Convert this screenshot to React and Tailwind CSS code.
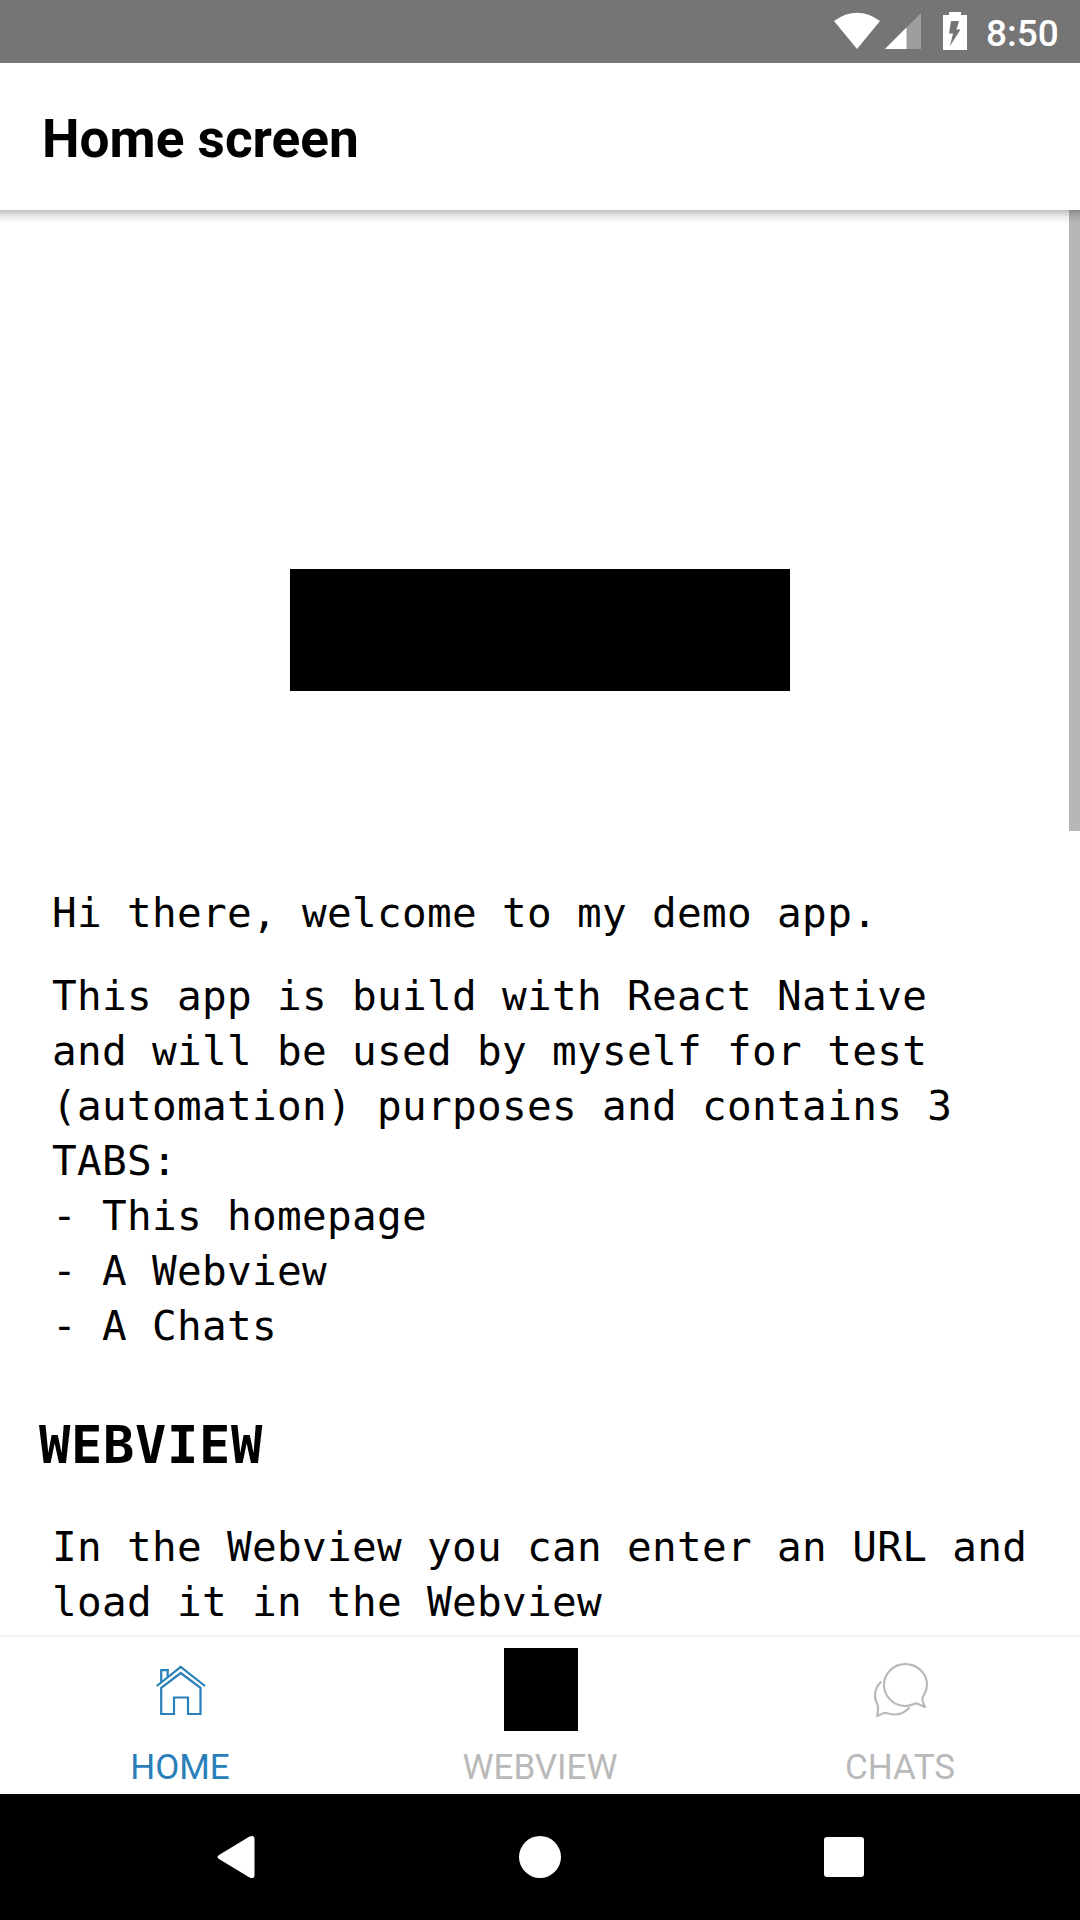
function StatusBar() {
  return (
    <div className="flex h-[63px] shrink-0 justify-end bg-[#757575] pr-[22px] text-white">
      <svg className="h-[63px] w-[150px]" viewBox="830 0 150 63" fill="currentColor">
        <path d="M834 21Q857 4.500 880 21L857 49Z" />
        <path d="M921 13V49H885Z" opacity="0.3" />
        <path d="M906.500 27.500V49H885Z" />
        <path d="M949 12H961V15H967V50H943V15H949Z" />
        <path d="M951 21H959L956.500 29.500H960.500L950 46L953 33.500H949Z" fill="#757575" />
      </svg>
      <span className="ml-[5px] w-[73px] whitespace-nowrap pl-px font-['Roboto'] text-[37px] leading-[67px] font-medium">8:50</span>
    </div>
  );
}

function HomeIcon() {
  return (
    <svg className="ml-px h-[62px] w-[62px]" viewBox="30 40 62 62" fill="none" stroke="currentColor" strokeWidth="2.2">
      <path d="M36.800 66L60.700 47L85 66" />
      <path d="M41.200 62V50.200H47.700V57" />
      <path d="M41.200 67.800L60.700 53L80.500 67.800V94H68V77.500H54V94H41.200Z" />
    </svg>
  );
}

function ChatIcon() {
  return (
    <svg className="ml-[2px] h-[62px] w-[62px]" viewBox="40 40 62 62" fill="none" stroke="currentColor" strokeWidth="2.2" strokeLinejoin="round">
      <path d="M92.700 77.500Q91.500 80 95 87L86.300 83.300C84 83 81 86 75.300 86C63.500 86 54 76.500 54 65C54 53.500 63.500 44.200 75.300 44.200C87.500 44.200 97 53.500 97 64.500C97 71 94.500 73.500 92.700 77.500Z" />
      <path d="M51.500 61.500C45 67 43.500 76 46.500 82.500Q49.500 87 47 96L54 93C57 92.500 59 94.500 64.500 94.500C71 94.500 75.500 92 79.500 87.500" />
    </svg>
  );
}

function Tab({ label, color, children }) {
  return (
    <div className={`flex flex-1 flex-col items-center ${color}`}>
      <div className="mt-[10px] flex h-[86px] items-end justify-center">{children}</div>
      <span className="mt-[14px] font-['Roboto'] text-[35px] leading-[41px]">{label}</span>
    </div>
  );
}

export default function App() {
  return (
    <div className="flex h-[1920px] w-[1080px] flex-col overflow-hidden bg-white font-['Roboto',sans-serif] text-black">
      <StatusBar />
      <header className="relative z-10 flex h-[147px] shrink-0 items-center bg-white pl-[42px]">
        <h1 className="pt-[4px] text-[53.2px] leading-[62px] font-bold">Home screen</h1>
        <div className="absolute top-full left-0 h-[14px] w-full bg-linear-to-b from-black/25 via-black/7 to-transparent" />
      </header>
      <main className="relative h-[1425px] shrink-0 overflow-hidden font-['DejaVu_Sans_Mono',monospace] text-[41px] leading-[55px] tracking-[0.32px]">
        <div className="mx-auto mt-[359px] h-[122px] w-[500px] bg-black" />
        <p className="mt-[195px] ml-[52px]">Hi there, welcome to my demo app.</p>
        <p className="mt-[28px] ml-[52px] whitespace-pre">{`This app is build with React Native
and will be used by myself for test
(automation) purposes and contains 3
TABS:
- This homepage
- A Webview
- A Chats`}</p>
        <h2 className="mt-[55px] ml-[39px] text-[52px] leading-[72px] font-bold tracking-[0.7px]">WEBVIEW</h2>
        <p className="mt-[39px] ml-[52px] whitespace-pre">{`In the Webview you can enter an URL and
load it in the Webview`}</p>
        <div className="absolute top-0 right-0 h-[621px] w-[11px] bg-[#b7b7b7]" />
      </main>
      <nav className="flex h-[159px] shrink-0 border-t-2 border-[#f4f4f4] bg-white">
        <Tab label="HOME" color="text-[#2980b9]">
          <div className="pb-[11px]"><HomeIcon /></div>
        </Tab>
        <Tab label="WEBVIEW" color="text-[#b9b9b9]">
          <div className="mb-[2px] ml-[2px] h-[83px] w-[74px] bg-black" />
        </Tab>
        <Tab label="CHATS" color="text-[#b9b9b9]">
          <div className="pb-[11px]"><ChatIcon /></div>
        </Tab>
      </nav>
      <div className="flex h-[126px] shrink-0 items-center justify-between bg-black px-[216px] text-white">
        <svg className="h-[44px] w-[40px]" viewBox="216 1835 40 44" fill="currentColor">
          <path d="M219 1855L249.500 1836.500Q254.500 1834.500 254.500 1839V1875Q254.500 1879.500 249.500 1877.500L219 1859Q216 1857 219 1855Z" />
        </svg>
        <div className="h-[42px] w-[42px] rounded-full bg-white" />
        <div className="h-[40px] w-[40px] rounded-[3px] bg-white" />
      </div>
    </div>
  );
}
